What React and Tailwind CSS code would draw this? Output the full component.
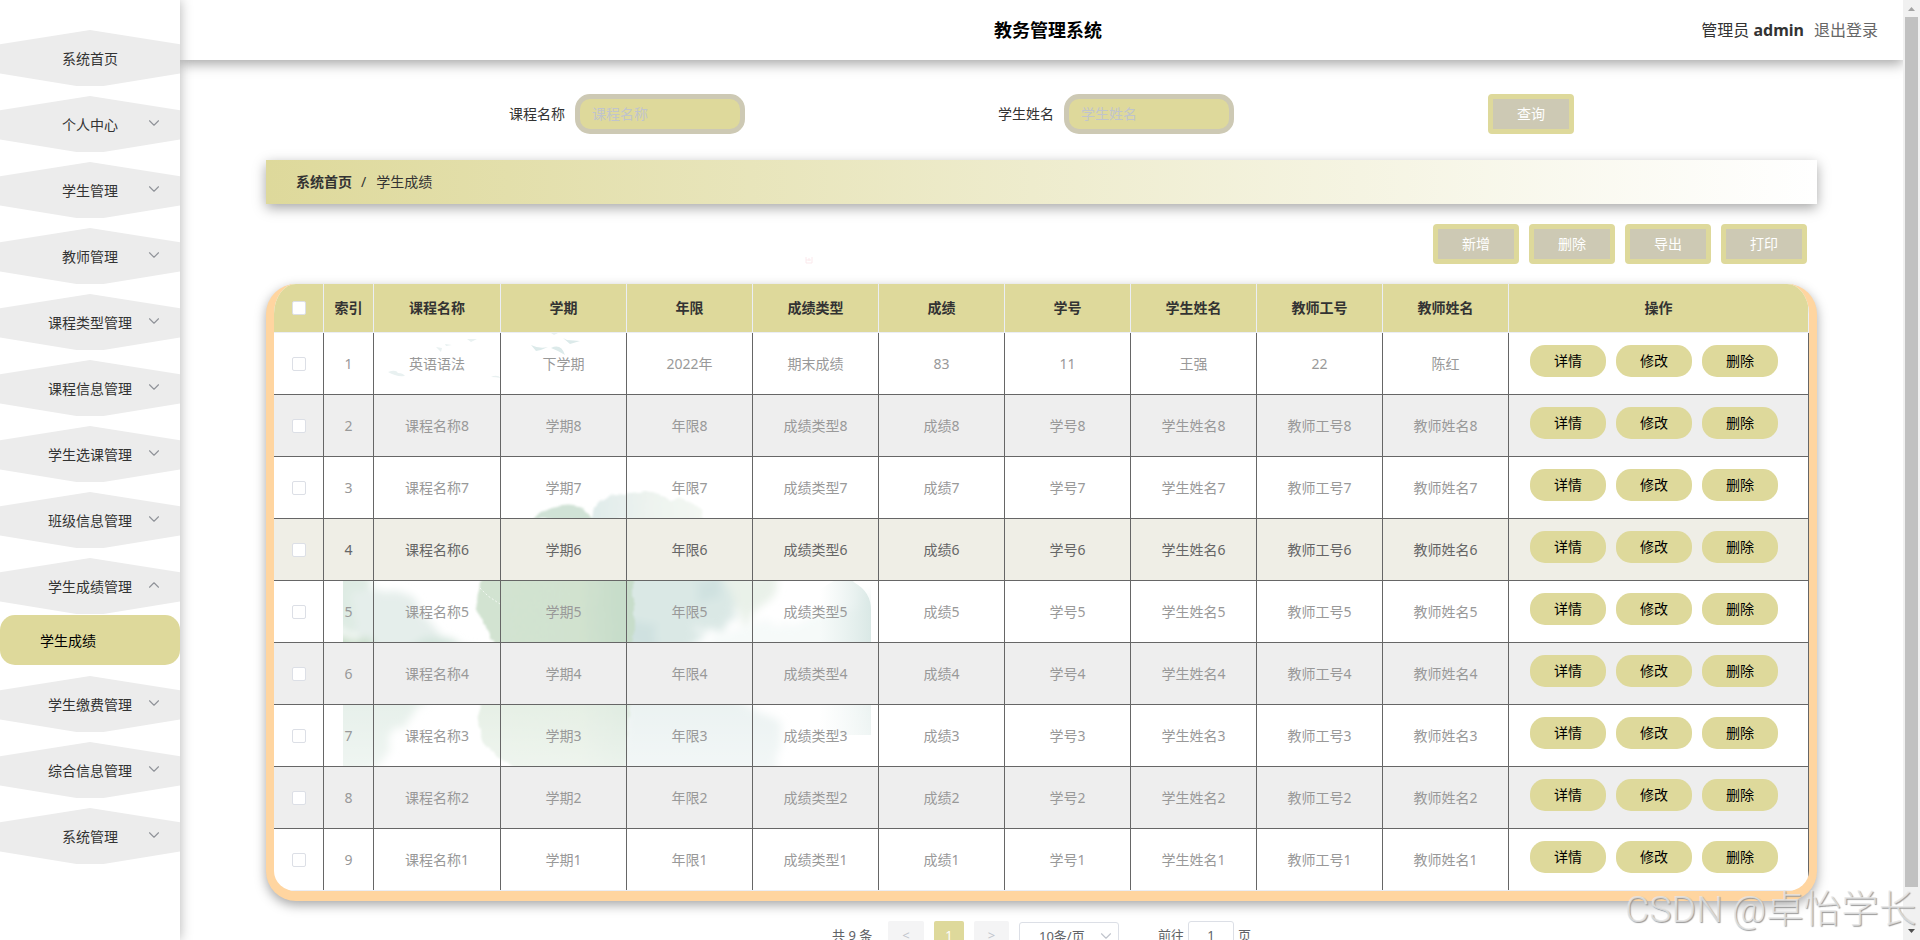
import { FiChevronDown, FiChevronUp } from 'react-icons/fi';

const menus = [
  { name: '系统首页' },
  { name: '个人中心', sub: true },
  { name: '学生管理', sub: true },
  { name: '教师管理', sub: true },
  { name: '课程类型管理', sub: true },
  { name: '课程信息管理', sub: true },
  { name: '学生选课管理', sub: true },
  { name: '班级信息管理', sub: true },
  { name: '学生成绩管理', sub: true, children: ['学生成绩'] },
  { name: '学生缴费管理', sub: true },
  { name: '综合信息管理', sub: true },
  { name: '系统管理', sub: true },
];

const columns = ['课程名称', '学期', '年限', '成绩类型', '成绩', '学号', '学生姓名', '教师工号', '教师姓名'];

const rows = [
  ['英语语法', '下学期', '2022年', '期末成绩', '83', '11', '王强', '22', '陈红'],
  ...[8, 7, 6, 5, 4, 3, 2, 1].map((n) => columns.map((c) => c + n)),
];

const gridCols = 'grid grid-cols-[50px_50px_127px_repeat(8,126px)_300px]';

const Sidebar = () => (
  <aside className="relative z-20 w-[180px] h-[940px] shrink-0 bg-white pt-[30px] shadow-[0_0_12px_rgba(0,0,0,0.3)]">
    {menus.map((menu) => (
      <div key={menu.name} className="mb-[10px]">
        <div className="relative h-[56px] bg-[#ececec] flex items-center justify-center pt-px text-[14px] text-[#333] [clip-path:polygon(50%_0,100%_14.3px,100%_43.4px,57.5%_100%,42.5%_100%,0_43.4px,0_14.3px)]">
          {menu.name}
          {menu.sub && (
            <span className="absolute right-[17px] top-[18px] text-[#909399]">
              {menu.children ? (
                <FiChevronUp size={18} strokeWidth={1.5} />
              ) : (
                <FiChevronDown size={18} strokeWidth={1.5} />
              )}
            </span>
          )}
        </div>
        {menu.children?.map((child) => (
          <div
            key={child}
            className="mt-px mb-[11px] h-[50px] rounded-[15px] bg-[#ded99b] pl-10 flex items-center text-[14px] text-black"
          >
            {child}
          </div>
        ))}
      </div>
    ))}
  </aside>
);

const Field = ({ label }) => (
  <div className="flex items-center">
    <label className="w-[56px] mr-[10px] pb-px text-[14px] text-[#333]">{label}</label>
    <input
      type="text"
      placeholder={label}
      className="w-[170px] h-10 rounded-[15px] border-[5px] border-[#cdc9b4] bg-[#ded99b] px-3 pb-[2px] text-[14px] placeholder:text-[#c0c4cc]"
    />
  </div>
);

const FrameButton = ({ children }) => (
  <button className="w-[86px] h-10 rounded-[4px] border-[5px] border-[#ded99b] bg-[#cdc9b4] pb-[2px] text-[14px] text-white">
    {children}
  </button>
);

const Checkbox = () => (
  <span className="block w-[14px] h-[14px] rounded-[2px] border border-[#dcdfe6] bg-white" />
);

// Watercolor wash behind the table, hidden by the grey rows
const Wash = () => (
  <svg className="absolute left-0 top-0 w-[1535px] h-[607px]" viewBox="274 284 1535 607">
    <defs>
      <filter id="soft" x="-20%" y="-20%" width="140%" height="140%">
        <feTurbulence type="fractalNoise" baseFrequency="0.03" numOctaves="3" seed="4" result="noise" />
        <feDisplacementMap in="SourceGraphic" in2="noise" scale="26" result="rough" />
        <feGaussianBlur in="rough" stdDeviation="4" />
      </filter>
      <filter id="edge" x="-10%" y="-10%" width="120%" height="120%">
        <feTurbulence type="fractalNoise" baseFrequency="0.06" numOctaves="3" seed="2" result="noise" />
        <feDisplacementMap in="SourceGraphic" in2="noise" scale="8" xChannelSelector="R" yChannelSelector="G" result="rough" />
        <feGaussianBlur in="rough" stdDeviation="1" />
      </filter>
      <linearGradient id="green" x1="0" x2="1">
        <stop offset="0" stopColor="#d2e3d1" />
        <stop offset="0.65" stopColor="#d1e2cf" />
        <stop offset="0.9" stopColor="#c7ddca" />
      </linearGradient>
      <linearGradient id="cloud" x1="0" x2="1">
        <stop offset="0" stopColor="#dfebea" />
        <stop offset="0.5" stopColor="#edf3ef" />
        <stop offset="1" stopColor="#f4f8f3" />
      </linearGradient>
      <linearGradient id="fade" x1="0" x2="0" y1="0" y2="1">
        <stop offset="0" stopColor="#fff" stopOpacity="0.35" />
        <stop offset="1" stopColor="#fff" stopOpacity="0.65" />
      </linearGradient>
      <linearGradient id="rim" x1="0" x2="1">
        <stop offset="0" stopColor="#dbe9e6" stopOpacity="0" />
        <stop offset="1" stopColor="#d3e4e1" />
      </linearGradient>
      <clipPath id="image">
        <path d="M343 284H871V735Q868 748 850 757L780 775L760 840H343Z" />
      </clipPath>
    </defs>
    <g clipPath="url(#image)">
      <path
        d="M592 520C592 500 608 494 625 497C650 489 660 497 672 500C690 494 702 508 704 520Z"
        fill="url(#cloud)"
        filter="url(#edge)"
      />
      <path d="M534 520C542 508 552 509 560 505C575 503 584 506 595 520Z" fill="#d0e2d6" filter="url(#edge)" />
      <g filter="url(#soft)">
        <path d="M325 570H365V630H325Z" fill="#deebe3" />
        <path d="M365 585C390 580 420 595 420 610L445 640L430 665H355V600Z" fill="#e5eeeb" />
        <path d="M325 630L372 640V665H325Z" fill="#c9deca" />
        <path d="M400 650L415 635L480 648L485 665H400Z" fill="#d2e4db" />
        <path d="M620 570H725L735 605L720 625L700 632L690 665H620Z" fill="#dae8e5" />
        <path d="M625 620H655V650H625ZM690 575H722V600L700 605Z" fill="#cfe1e0" />
        <path d="M725 570H785L775 600L740 625Z" fill="#e9f1e9" />
        <path d="M710 632L840 615L880 590V665H700Z" fill="#f6faf9" />
        <path d="M325 690H430L400 730L365 780H325Z" fill="#d3e4da" />
        <path d="M620 690H720L790 730L770 780H620Z" fill="#dbe8e7" />
      </g>
      <path d="M820 590Q845 570 855 583Q871 592 871 610V735H820Z" fill="url(#rim)" opacity="0.8" />
      <path
        d="M484 575C470 600 474 615 486 625C498 642 495 665 490 690C468 710 478 730 486 742C495 757 500 768 530 770H626L634 640V578Z"
        fill="url(#green)"
        filter="url(#edge)"
      />
      <path d="M480 588l8 8l12 8" fill="none" stroke="#fff" strokeDasharray="2 2" strokeOpacity="0.7" />
      <rect x="343" y="670" width="528" height="100" fill="url(#fade)" />
    </g>
    <g fill="#e9f1f1">
      <path d="M388 372q8 -3 10 1q5 0 7 3q-9 1 -17 -4z" />
      <path d="M436 347l6 1l-1 4zM467 339l10 0l-6 3zM445 344l7 1l-6 1z" />
      <path d="M551 333h7l-4 2zM491 377q6 -3 10 1q-5 -1 -10 -1z" />
    </g>
    <g fill="#dceaea">
      <path d="M531 345q8 4 17 2q-6 3 -12 4zM563 338l4 2l13 1l-10 3zM551 348q10 -5 14 7q-6 -4 -14 -7z" />
    </g>
  </svg>
);

const TableHead = () => (
  <div className={`${gridCols} h-[49px] bg-[#ded99b] border-b border-[#ebeef5] text-[14px] font-bold text-[#333]`}>
    <div className="flex items-center justify-center border-r border-[#ebeef5]">
      <Checkbox />
    </div>
    {['索引', ...columns, '操作'].map((name) => (
      <div key={name} className="flex items-center justify-center border-r border-[#ebeef5] pb-px">
        {name}
      </div>
    ))}
  </div>
);

const TableRow = ({ row, index }) => {
  const hovered = index === 3;
  const last = index === 8;
  let color = index % 2 ? 'bg-[#eee] text-[#999]' : 'text-[#999]';
  if (hovered) color = 'bg-[#efeee6] text-[#666]';

  return (
    <div className={`${gridCols} h-[62px] border-b text-[14px] ${last ? 'border-[#ebeef5]' : 'border-[#666]'} ${color}`}>
      <div className="flex items-center justify-center border-r border-[#666]">
        <Checkbox />
      </div>
      {[index + 1, ...row].map((value, i) => (
        <div key={i} className="flex items-center justify-center border-r border-[#666]">
          {value}
        </div>
      ))}
      <div className="flex gap-[10px] border-r border-[#666] pl-[21px] pt-3 text-black">
        {['详情', '修改', '删除'].map((action) => (
          <button key={action} className="w-[76px] h-8 rounded-[15px] bg-[#ded99b] pb-px">
            {action}
          </button>
        ))}
      </div>
    </div>
  );
};

const Pagination = () => (
  <div className="mt-5 flex h-7 items-start pl-[566px] text-[13px] leading-7 text-[#606266]">
    <span className="w-[56px]">共 9 条</span>
    <span className="w-9 rounded-[2px] bg-[#f4f4f5] text-center text-[#c0c4cc]">&lt;</span>
    <span className="ml-[10px] w-[30px] rounded-[2px] bg-[#ded99b] text-center text-white">1</span>
    <span className="ml-[10px] w-[35px] rounded-[2px] bg-[#f4f4f5] text-center text-[#c0c4cc]">&gt;</span>
    <span className="ml-[10px] mt-px flex w-[100px] items-center justify-between rounded-[3px] border border-[#dcdfe6] pl-[19px] pr-[3px] leading-[26px]">
      10条/页
      <FiChevronDown size={18} strokeWidth={1.5} className="text-[#c0c4cc]" />
    </span>
    <span className="ml-[39px] w-[30px]">前往</span>
    <span className="w-[46px] rounded-[3px] border border-[#dcdfe6] text-center leading-[26px]">1</span>
    <span className="ml-1">页</span>
  </div>
);

const Scrollbar = () => (
  <div className="flex h-[940px] w-[17px] shrink-0 flex-col items-center justify-between bg-[#f1f1f1]">
    <svg width="17" height="17" viewBox="0 0 17 17" fill="#a3a3a3">
      <path d="M5 11L8.5 7L12 11Z" />
    </svg>
    <div className="mb-auto h-[870px] w-[13px] bg-[#c1c1c1]" />
    <svg width="17" height="17" viewBox="0 0 17 17" fill="#505050">
      <path d="M5 6L8.5 10L12 6Z" />
    </svg>
  </div>
);

const App = () => {
  return (
    <div className="relative flex h-[940px] w-[1920px] overflow-hidden bg-white font-['Noto_Sans','Noto_Sans_CJK_SC',sans-serif]">
      <Sidebar />

      <div className="flex min-w-0 flex-1 flex-col overflow-hidden">
        <header className="relative z-10 flex h-[60px] shrink-0 items-center bg-white shadow-[0_4px_12px_rgba(0,0,0,0.35)]">
          <h1 className="ml-[814px] w-[108px] whitespace-nowrap text-[18px] font-bold text-black">教务管理系统</h1>
          <div className="ml-auto mr-[25px] flex gap-[10px] whitespace-nowrap text-[16px]">
            <span className="text-[#333]">
              管理员 <b>admin</b>
            </span>
            <span className="text-[#666]">退出登录</span>
          </div>
        </header>

        <main className="w-[1551px] ml-[86px] pt-[34px]">
          <div className="flex h-10 items-center pl-[243px]">
            <Field label="课程名称" />
            <div className="ml-[253px]">
              <Field label="学生姓名" />
            </div>
            <div className="ml-[254px]">
              <FrameButton>查询</FrameButton>
            </div>
          </div>

          <div className="mt-[26px] flex h-11 items-center bg-linear-to-r from-[#ded99b] to-white pb-[2px] pl-[30px] text-[14px] text-[#333] shadow-[0_4px_12px_rgba(0,0,0,0.35)]">
            <b>系统首页</b>
            <span className="ml-[9px] mr-[10px]">/</span>
            <span>学生成绩</span>
          </div>

          <div className="relative mt-5 mr-[10px] flex justify-end gap-[10px]">
            {/* faint seal stamp of the background painting */}
            <svg className="absolute left-[539px] top-[32px]" width="8" height="9" fill="none" stroke="#fbe9ec">
              <path d="M1 1v6h6v-6M4 2v3M1 4h5" />
            </svg>
            {['新增', '删除', '导出', '打印'].map((name) => (
              <FrameButton key={name}>{name}</FrameButton>
            ))}
          </div>

          <div className="mt-5 w-[1551px] rounded-[30px] border-x-8 border-b-[10px] border-[#ffd5a0] bg-[#ffd5a0] shadow-[0_4px_12px_rgba(0,0,0,0.35)]">
            <div className="relative h-[607px] overflow-hidden bg-white [border-radius:22px_22px_22px_22px/30px_30px_20px_20px]">
              <Wash />
              <div className="relative">
                <TableHead />
                {rows.map((row, index) => (
                  <TableRow key={index} row={row} index={index} />
                ))}
              </div>
            </div>
          </div>

          <Pagination />
        </main>
      </div>

      <Scrollbar />

      <div className="absolute left-[1625px] top-[884px] z-30 whitespace-nowrap font-['Roboto','Noto_Sans_CJK_SC',sans-serif] text-[37.5px] font-light leading-[50px] text-[#e6e6e6]/80 [text-shadow:1px_1px_1px_#999]">
        CSDN @卓怡学长
      </div>
    </div>
  );
};

export default App;
